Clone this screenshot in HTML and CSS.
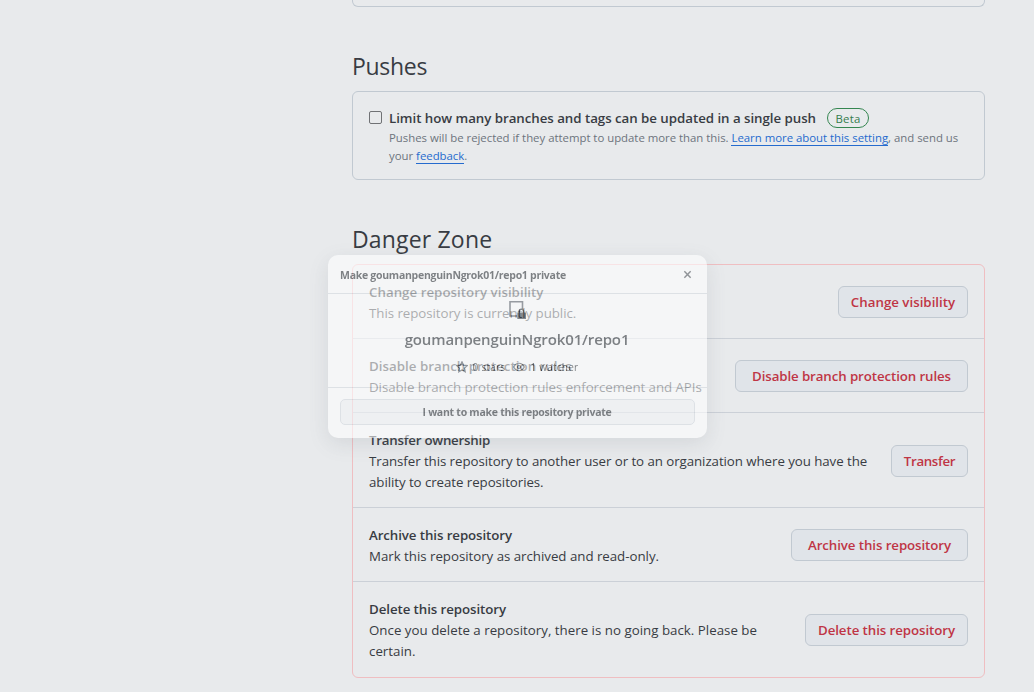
FILE: index.html
```html
<!DOCTYPE html>
<html lang="en">
<head>
<meta charset="utf-8">
<title>Repository settings</title>
<link rel="stylesheet" href="styles.css">
</head>
<body>
<main class="settings">
  <div class="box previous"></div>
  <h2 class="heading pushes-heading">Pushes</h2>
  <section class="box pushes">
    <span class="checkbox"></span>
    <div class="pushes-body">
      <div class="pushes-title"><strong>Limit how many branches and tags can be updated in a single push</strong><span class="beta">Beta</span></div>
      <p class="note">Pushes will be rejected if they attempt to update more than this. <a href="#">Learn more about this setting</a>, and send us<br>your <a href="#">feedback</a>.</p>
    </div>
  </section>
  <h2 class="heading danger-heading">Danger Zone</h2>
  <section class="danger">
    <div class="row visibility"><div class="text"><strong>Change repository visibility</strong><p>This repository is currently public.</p></div><button class="btn">Change visibility</button></div>
    <div class="row protection"><div class="text"><strong>Disable branch protection rules</strong><p>Disable branch protection rules enforcement and APIs</p></div><button class="btn">Disable branch protection rules</button></div>
    <div class="row tall transfer"><div class="text"><strong>Transfer ownership</strong><p>Transfer this repository to another user or to an organization where you have the<br>ability to create repositories.</p></div><button class="btn">Transfer</button></div>
    <div class="row archive"><div class="text"><strong>Archive this repository</strong><p>Mark this repository as archived and read-only.</p></div><button class="btn">Archive this repository</button></div>
    <div class="row last delete"><div class="text"><strong>Delete this repository</strong><p>Once you delete a repository, there is no going back. Please be<br>certain.</p></div><button class="btn">Delete this repository</button></div>
  </section>
</main>
<div class="dialog">
  <header class="dialog-head"><span>Make goumanpenguinNgrok01/repo1 private</span>
    <svg class="close" viewBox="0 0 10 10"><path d="M1.500 1.500l7 7M8.500 1.500l-7 7"/></svg></header>
  <div class="dialog-body">
    <svg class="repo" viewBox="0 0 19 20"><path class="outline" d="M9 16H2V1.700H14.500V9"/><path class="lock" d="M10.500 12.500V11.500a2.900 2.900 0 0 1 5.800 0V12.500h1.700v6.500H9.300v-6.500zM12 12.500h2.800v-1a1.400 1.400 0 0 0-2.800 0z"/></svg>
    <div class="name">goumanpenguinNgrok01/repo1</div>
    <div class="stats">
      <svg viewBox="0 0 16 16"><path d="M8 1l2.100 4.500 4.900.6-3.600 3.400.9 4.900L8 12l-4.300 2.400.9-4.900L1 6.100l4.900-.6z"/></svg><span>0 stars</span>
      <svg class="eye" viewBox="0 0 16 16"><path d="M1 8s2.500-5 7-5 7 5 7 5-2.500 5-7 5-7-5-7-5z"/><circle cx="8" cy="8" r="2"/></svg><span>1 watcher</span>
    </div>
  </div>
  <footer class="dialog-foot"><button class="confirm">I want to make this repository private</button></footer>
</div>
</body>
</html>
```
FILE: styles.css
```css
* { box-sizing: border-box; }
body { margin: 0; height: 692px; overflow: hidden; background: #e8eaec; color: #383c43; font: 13.3px/21px "Open Sans", "Noto Sans", sans-serif; }
h2, p { margin: 0; }
strong { font-weight: 600; }
a { color: #256bce; text-decoration: none; border-bottom: 1px solid #256bce; }
.settings { width: 633px; margin-left: 352px; white-space: nowrap; }
.box { border: 1px solid #c1c9d1; border-radius: 6px; }
.previous { height: 7px; border-top: 0; border-radius: 0 0 6px 6px; }
.heading { height: 36px; font-size: 23px; line-height: 37px; font-weight: 375; }
.pushes-heading { margin-top: 41px; margin-bottom: 7px; letter-spacing: -.3px; }
.pushes { height: 89px; padding: 16px; display: flex; gap: 7px; }
.checkbox { width: 13px; height: 13px; margin-top: 3px; border: 1px solid #707275; border-radius: 2px; flex: none; }
.pushes-title { display: flex; align-items: center; height: 20px; gap: 11px; line-height: 20px; letter-spacing: -.039px; }
.beta { width: 42px; height: 20px; border: 1px solid #348650; border-radius: 10px; color: #347c4c; font-size: 11.4px; line-height: 19px; text-align: center; letter-spacing: .2px; }
.note { color: #6d747d; font-size: 11.4px; line-height: 18px; margin-top: 1px; letter-spacing: -.018px; }
.danger-heading { margin-top: 41px; margin-bottom: 7px; letter-spacing: .17px; }
.danger { border: 1px solid #efbec1; border-radius: 6px; }
.row { height: 73px; padding: 16px 16px 0; display: flex; justify-content: space-between; align-items: flex-start; }
.row + .row { height: 74px; border-top: 1px solid #cbd0d7; }
.row + .tall { height: 95px; }
.row + .last { height: 96px; }
.text { height: 42px; padding-top: 1px; }
.text strong { display: block; height: 21px; }
.text p { letter-spacing: -.05px; }
.btn { height: 32px; margin-top: 5px; padding: 0; border: 1px solid #c1c9d1; border-radius: 6px; background: #e0e4e9; color: #bf3545; font: 600 13.3px/20px "Open Sans", sans-serif; }
.tall .btn, .last .btn { margin-top: 16px; }
.visibility .btn { width: 130px; }
.visibility strong { letter-spacing: -.034px; }
.protection .btn { width: 233px; }
.protection .btn, .protection strong { letter-spacing: -.1px; }
.transfer .btn { width: 77px; letter-spacing: -.35px; }
.transfer strong { letter-spacing: -.237px; }
.transfer p { letter-spacing: -.064px; }
.archive .btn { width: 177px; }
.archive .btn, .archive strong { letter-spacing: -.09px; }
.archive p { letter-spacing: -.029px; }
.delete .btn { width: 163px; }
.delete .btn, .delete strong { letter-spacing: -.077px; }
.delete p { letter-spacing: .012px; }
.visibility strong, .protection strong { font-weight: 540; letter-spacing: .02px; }
.dialog { position: absolute; left: 327.5px; top: 255px; width: 379px; height: 182.5px; border-radius: 10px; background: #fff; opacity: .58; box-shadow: 0 6px 20px rgba(110,120,130,.28); color: #303439; white-space: nowrap; }
.dialog-head, .dialog-body, .confirm { filter: blur(.4px); }
.dialog-head { height: 39px; padding: 1px 15px 0 12.5px; display: flex; align-items: center; justify-content: space-between; border-bottom: 1px solid #d5dae0; font-size: 10.5px; font-weight: 700; letter-spacing: -.27px; }
.dialog-head span { padding-top: 1px; }
.close { width: 9px; height: 9px; fill: none; stroke: #50555b; stroke-width: 1.6; }
.dialog-body { height: 94px; border-bottom: 1px solid #d5dae0; display: flex; flex-direction: column; align-items: center; }
.repo { width: 19px; height: 20px; margin-top: 6px; }
.outline { fill: none; stroke: #5c626a; stroke-width: 1.6; }
.lock { fill: #3c4148; fill-rule: evenodd; }
.name { font-size: 15px; font-weight: 650; height: 24px; line-height: 24px; margin-top: 7px; letter-spacing: -.13px; }
.stats { display: flex; align-items: center; gap: 5px; font-size: 10px; line-height: 16px; margin-top: 8px; height: 16px; letter-spacing: .25px; }
.stats svg { width: 12px; height: 12px; fill: none; stroke: #555b62; stroke-width: 1.6; }
.stats .eye { margin-left: 3px; }
.dialog-foot { padding: 11px 12px; }
.confirm { display: block; width: 100%; height: 26px; padding: 0; border: 1px solid #d5dae0; border-radius: 5px; background: #f3f4f6; color: #303439; font: 700 10.5px/24px "Open Sans", sans-serif; letter-spacing: -.26px; }
```
